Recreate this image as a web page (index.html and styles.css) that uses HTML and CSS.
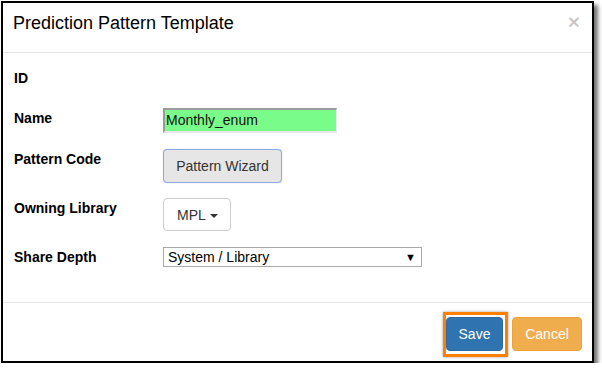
FILE: index.html
```html
<!DOCTYPE html>
<html>
<head>
<meta charset="utf-8">
<link rel="stylesheet" href="styles.css">
</head>
<body>
<div class="frame">
  <div class="modal-header">
    <h4 class="modal-title">Prediction Pattern Template</h4>
    <span class="close">&times;</span>
  </div>
  <div class="modal-body">
    <div class="row row-id">
      <label class="lbl">ID</label>
      <div class="ctl"></div>
    </div>
    <div class="row row-name">
      <label class="lbl">Name</label>
      <div class="ctl"><div class="input-green">Monthly_enum</div></div>
    </div>
    <div class="row row-pattern">
      <label class="lbl">Pattern Code</label>
      <div class="ctl"><button class="btn btn-default btn-focus">Pattern Wizard</button></div>
    </div>
    <div class="row row-lib">
      <label class="lbl">Owning Library</label>
      <div class="ctl"><button class="btn btn-white">MPL <span class="caret"></span></button></div>
    </div>
    <div class="row row-depth">
      <label class="lbl">Share Depth</label>
      <div class="ctl"><div class="select"><span>System / Library</span><span class="arrow">&#9660;</span></div></div>
    </div>
  </div>
  <div class="modal-footer">
    <span class="highlight"><button class="btn btn-primary">Save</button></span>
    <button class="btn btn-warning">Cancel</button>
  </div>
</div>
</body>
</html>
```
FILE: styles.css
```css
html, body {
  margin: 0;
  padding: 0;
  background: #fff;
}
body {
  font-family: "Liberation Sans", Arial, sans-serif;
  color: #000;
}
.frame {
  box-sizing: border-box;
  margin: 1px 0 0 1px;
  width: 593px;
  height: 362px;
  border: 2px solid #000;
  background: #fff;
  box-shadow: 4px 4px 4px rgba(0, 0, 0, 0.55);
  display: flex;
  flex-direction: column;
}
.modal-header {
  box-sizing: border-box;
  height: 50px;
  padding: 10px 12px 0 10px;
  border-bottom: 1px solid #e5e5e5;
  display: flex;
  justify-content: space-between;
  align-items: flex-start;
}
.modal-title {
  margin: 0;
  font-size: 18px;
  font-weight: normal;
  line-height: 20px;
  color: #000;
}
.close {
  font-size: 21px;
  font-weight: bold;
  line-height: 20px;
  color: rgba(0, 0, 0, 0.22);
  margin-top: -1px;
}
.modal-body {
  box-sizing: border-box;
  height: 250px;
  padding: 15px 0 0 11px;
  border-bottom: 1px solid #e5e5e5;
  display: grid;
  grid-template-rows: 40px 41px 49px 49px 20px;
  align-content: start;
}
.row {
  display: flex;
  align-items: flex-start;
}
.lbl {
  width: 149px;
  font-size: 14px;
  font-weight: bold;
  line-height: 20px;
  padding-left: 0;
}
.ctl {
  display: flex;
}
.input-green {
  box-sizing: border-box;
  width: 174px;
  height: 25px;
  background: #7afc8a;
  border-top: 2px solid #9a9a9a;
  border-left: 2px solid #9a9a9a;
  border-right: 1px solid #e8e8e8;
  border-bottom: 2px solid #e8e8e8;
  font-size: 14px;
  line-height: 21px;
  padding-left: 1px;
  color: #111;
}
.btn {
  box-sizing: border-box;
  font-family: "Liberation Sans", Arial, sans-serif;
  font-size: 14px;
  line-height: 20px;
  height: 34px;
  padding: 6px 12px;
  border: 1px solid #ccc;
  border-radius: 4px;
  background: #fff;
  color: #333;
  margin: 0;
  white-space: nowrap;
}
.btn-focus {
  width: 119px;
  background: #e6e6e6;
  border-color: #8eaadb;
  box-shadow: 0 0 1px rgba(102, 140, 210, 0.6);
}
.btn-white {
  height: 33px;
  padding: 6px 12px 6px 13px;
  text-align: left;
}
.caret {
  display: inline-block;
  width: 0;
  height: 0;
  margin-left: 1px;
  vertical-align: middle;
  border-top: 4px solid #333;
  border-left: 4px solid transparent;
  border-right: 4px solid transparent;
}
.select {
  box-sizing: border-box;
  width: 259px;
  height: 20px;
  border: 1px solid #a9a9a9;
  display: flex;
  justify-content: space-between;
  align-items: center;
  padding: 0 5px 0 4px;
  font-size: 14px;
  line-height: 18px;
  color: #000;
}
.arrow {
  font-size: 11px;
  line-height: 18px;
}
.modal-footer {
  flex: 1;
  display: flex;
  justify-content: flex-end;
  align-items: flex-start;
  padding: 9px 10px 0 0;
}
.highlight {
  display: inline-flex;
  border: 3px solid #ff8000;
  padding: 2px 2px 3px 0;
  box-shadow: 0 0 3px rgba(0, 0, 0, 0.35);
}
.btn-primary {
  width: 57px;
  background: #2f74b0;
  border-color: #2b6aa3;
  color: #fff;
  padding: 6px 0;
  text-align: center;
}
.btn-warning {
  width: 70px;
  margin-left: 4px;
  margin-top: 5px;
  background: #f0ad4e;
  border-color: #eea236;
  color: #fff;
  padding: 6px 0;
  text-align: center;
}
```
